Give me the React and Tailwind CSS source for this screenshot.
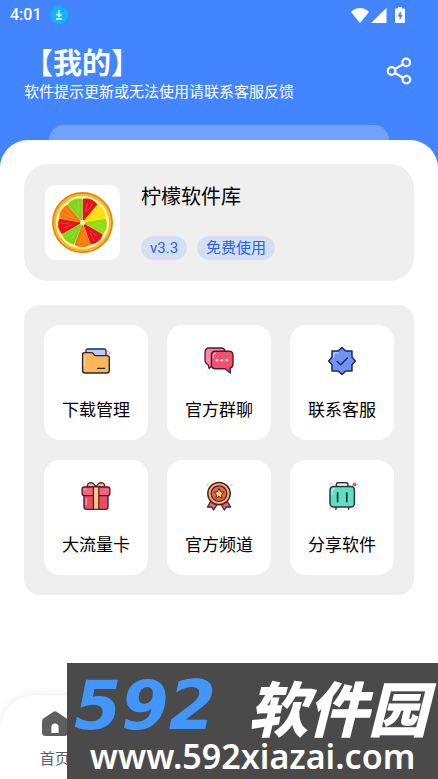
// App.jsx — "我的" profile screen
const tools = [
  { label: '下载管理', Icon: FolderIcon },
  { label: '官方群聊', Icon: ChatIcon },
  { label: '联系客服', Icon: BadgeIcon },
  { label: '大流量卡', Icon: GiftIcon },
  { label: '官方频道', Icon: MedalIcon },
  { label: '分享软件', Icon: SuitcaseIcon },
];

// Clockwise from twelve o'clock, 40 degrees each
const slices = ['#e5141c', '#ffe000', '#8fdc14', '#e5141c', '#f57c0a', '#7fd818', '#e5141c', '#f57c0a', '#7fd818'];

function FruitLogo() {
  return (
    <svg viewBox="0 0 60 60" className="size-[61px]" aria-hidden="true">
      <circle cx="30" cy="30" r="30" fill="#e08410" />
      <circle cx="30" cy="30" r="28.4" fill="#ffb52e" />
      <circle cx="30" cy="30" r="26.2" fill="#fff0a0" />
      {slices.map((color, i) => (
        <g key={i} transform={`rotate(${i * 40 + 20} 30 30)`}>
          <path d="M30 26.6 L23.4 8.6 Q30 5 36.6 8.6 Z" fill={color} stroke={color} strokeWidth="2" strokeLinejoin="round" />
          <path d="M28 11 L29.4 19 M33 9 L31 17" stroke="#fff" strokeOpacity=".2" strokeWidth=".8" strokeLinecap="round" />
        </g>
      ))}
      <circle cx="30" cy="30" r="2.4" fill="#fbe6b0" />
    </svg>
  );
}

function FolderIcon() {
  return (
    <svg viewBox="0 0 30 30" className="size-[30px]" fill="none" strokeLinejoin="round" strokeLinecap="round" aria-hidden="true">
      <circle cx="27.2" cy="6.8" r="1.7" stroke="#f5a3b8" />
      <path d="M5 9 V4.5 Q5 3 6.5 3 H23 Q25 3 25 5 V10 H5 Z" fill="#b9cdfa" stroke="#2b2640" strokeWidth="1.3" />
      <path d="M1.6 8.5 Q1.6 6.6 3.5 6.6 H10.5 Q12 6.6 12.6 8 Q13.2 9.6 15 9.6 H26 Q28.3 9.6 28.3 12 V24.5 Q28.3 27 25.8 27 H4.2 Q1.6 27 1.6 24.5 Z" fill="#fcb65a" stroke="#2b2640" strokeWidth="1.4" />
      <path d="M16.5 22.4 H23.5" stroke="#2b2640" strokeWidth="1.4" />
      <path d="M3.4 10 V21" stroke="#ffd9a0" strokeWidth="1" />
    </svg>
  );
}

function ChatIcon() {
  return (
    <svg viewBox="0 0 30 30" className="size-[30px]" fill="none" strokeLinejoin="round" aria-hidden="true">
      <circle cx="5.4" cy="26.4" r="1.7" stroke="#d9d9e2" strokeWidth=".8" />
      <path d="M5 2 H17 Q21 2 21 6 V14 Q21 19 16 19 H8.5 L5.2 22.5 L4 18.5 Q1 17.6 1 14 V6.5 Q1 2 5 2 Z" fill="#f58ba0" stroke="#4a1b35" strokeWidth="1.3" />
      <path d="M11 5.2 H25 Q29 5.2 29 9.2 V18 Q29 21.5 26 22.2 L26.4 27 L21 22.8 H11.4 Q7.4 22.8 7.4 18.8 V9 Q7.4 5.2 11 5.2 Z" fill="#f4516c" stroke="#4a1b35" strokeWidth="1.4" />
      <path d="M9.4 12 V9.6 Q9.4 7.2 12 7.2" stroke="#ffb3c0" strokeWidth="1.2" />
      <g fill="#fff">
        <rect x="11.8" y="13" width="2.4" height="2.2" rx=".5" />
        <rect x="16.6" y="13" width="2.4" height="2.2" rx=".5" />
        <rect x="21.4" y="13" width="2.4" height="2.2" rx=".5" />
      </g>
    </svg>
  );
}

function BadgeIcon() {
  return (
    <svg viewBox="0 0 30 30" className="size-[30px]" fill="none" strokeLinejoin="round" strokeLinecap="round" aria-hidden="true">
      <path d="M15 1.6 L18.8 5 H25 V11.2 L28.4 15 L25 18.8 V25 H18.8 L15 28.4 L11.2 25 H5 V18.8 L1.6 15 L5 11.2 V5 H11.2 Z" fill="#6f93f8" stroke="#25284f" strokeWidth="1.5" />
      <path d="M6.8 11.5 V6.8 H11.4" stroke="#b9cbff" strokeWidth="1.2" />
      <path d="M10.2 15.4 L13.8 18.8 L20.4 12" stroke="#25284f" strokeWidth="1.4" />
    </svg>
  );
}

function GiftIcon() {
  return (
    <svg viewBox="0 0 30 30" className="size-[30px]" fill="none" strokeLinejoin="round" strokeLinecap="round" aria-hidden="true">
      <circle cx="3.2" cy="3.2" r=".8" fill="#f4a08c" />
      <path d="M15 6 Q13 1.6 9.6 1.6 Q6.4 1.8 6 6 Z M15 6 Q17 1.6 20.4 1.6 Q23.6 1.8 24 6 Z" fill="#fbbf6b" stroke="#47203a" strokeWidth="1.3" />
      <path d="M3 14 H27 V26 Q27 28.4 24.6 28.4 H5.4 Q3 28.4 3 26 Z" fill="#ee4b62" stroke="#47203a" strokeWidth="1.4" />
      <path d="M3 6 H27 Q28.8 6 28.8 8 V12.6 Q28.8 14.6 27 14.6 H3 Q1.2 14.6 1.2 12.6 V8 Q1.2 6 3 6 Z" fill="#f9637a" stroke="#47203a" strokeWidth="1.4" />
      <path d="M12.4 6 H17.8 V28.4 H12.4 Z" fill="#fcc77a" stroke="#47203a" strokeWidth="1.2" />
      <path d="M3.2 9 Q3.2 7.8 4.6 7.8 M5.2 17.5 V24" stroke="#ffb1bd" strokeWidth="1.1" />
    </svg>
  );
}

function MedalIcon() {
  return (
    <svg viewBox="0 0 30 30" className="size-[30px]" fill="none" strokeLinejoin="round" aria-hidden="true">
      <path d="M2.4 3.6 H4.4 M3.4 2.6 V4.6 M26.6 4 H28.6 M27.6 3 V5" stroke="#f8b58c" strokeWidth=".9" />
      <path d="M7.4 19.4 L3.4 26 L7.6 25.8 L9.6 29 L14 22 Z M22.6 19.4 L26.6 26 L22.4 25.8 L20.4 29 L16 22 Z" fill="#f4616a" stroke="#43242f" strokeWidth="1.3" />
      <circle cx="15" cy="12.6" r="11.2" fill="#f9b25e" stroke="#43242f" strokeWidth="1.5" />
      <circle cx="15" cy="12.6" r="7.8" fill="#f0605a" stroke="#43242f" strokeWidth="1.3" />
      <path d="M15 7.4 L16.6 10.8 L20.2 11.2 L17.5 13.8 L18.2 17.4 L15 15.6 L11.8 17.4 L12.5 13.8 L9.8 11.2 L13.4 10.8 Z" fill="#fccb5e" stroke="#43242f" strokeWidth="1" />
    </svg>
  );
}

function SuitcaseIcon() {
  return (
    <svg viewBox="0 0 30 30" className="size-[30px]" fill="none" strokeLinejoin="round" strokeLinecap="round" aria-hidden="true">
      <circle cx="27.4" cy="3.6" r="1.9" fill="#f0566c" />
      <g fill="#fac2b0">
        <circle cx="4" cy="3" r=".9" />
        <circle cx="3.2" cy="27.8" r=".9" />
        <circle cx="28.6" cy="27.2" r=".9" />
      </g>
      <path d="M9.4 5.6 V3.4 Q9.4 1.8 11 1.8 H19.4 Q21 1.8 21 3.4 V5.6 M9 26 V28.2 M21.6 26 V28.2" stroke="#27364a" strokeWidth="1.5" />
      <rect x="3" y="5.6" width="24.4" height="20.4" rx="3.4" fill="#5fe0bd" stroke="#27364a" strokeWidth="1.5" />
      <path d="M5.2 13 V9.8 Q5.2 7.8 7.2 7.8" stroke="#c4f7e8" strokeWidth="1.2" />
      <path d="M10.6 12 V20.6 M19.8 12 V20.6" stroke="#27364a" strokeWidth="1.8" />
    </svg>
  );
}

function StatusBar() {
  return (
    <div className="flex h-[30px] items-center justify-between pl-[10px] pr-[33px]">
      <div className="flex items-center gap-2">
        <span className="text-[16px] font-medium leading-5">4:01</span>
        <svg viewBox="0 0 18 18" className="size-[18px]" aria-hidden="true">
          <circle cx="9" cy="9" r="9" fill="#0fb5fb" />
          <path d="M9 4.2 V10.4 M6.2 8 L9 10.8 L11.8 8 M6 13 H12" fill="none" stroke="#fff" strokeWidth="1.3" />
        </svg>
      </div>
      <div className="flex items-center">
        <svg viewBox="0 0 18 15" className="h-[15px] w-[18px]" fill="#fff" aria-hidden="true">
          <path d="M9 15 L0 4 Q4 0 9 0 Q14 0 18 4 Z" />
        </svg>
        <svg viewBox="0 0 16 15" className="ml-[2px] h-[15px] w-[16px]" fill="#fff" aria-hidden="true">
          <path d="M15.5 0 V15 H0 Z" />
        </svg>
        <svg viewBox="0 0 10 16" className="ml-2 h-4 w-[10px]" aria-hidden="true">
          <path d="M3 0 H7 V1.6 H9 Q10 1.6 10 2.6 V15 Q10 16 9 16 H1 Q0 16 0 15 V2.6 Q0 1.6 1 1.6 H3 Z" fill="#fff" />
          <path d="M5.8 4 L2.4 9.6 H4.6 V13.4 L7.8 7.8 H5.8 Z" fill="#4285ff" />
        </svg>
      </div>
    </div>
  );
}

function Watermark() {
  return (
    <div className="absolute bottom-0 right-0 flex h-[116px] w-[371px] flex-col items-center overflow-hidden whitespace-nowrap bg-[#4a4a4a]">
      <div className="flex h-[76px] w-full items-center justify-between pl-[7px] pr-[10px] pt-[10px] italic">
        <span className="font-['DejaVu_Sans'] text-[68px] font-bold leading-[64px] text-[#4296fb]">592</span>
        <span className="font-['Noto_Sans_CJK_SC'] text-[60px] font-black leading-[64px] text-white">软件园</span>
      </div>
      <span className="font-['Noto_Sans'] text-[34px] font-semibold leading-[34px] text-white">www.592xiazai.com</span>
    </div>
  );
}

export default function App() {
  return (
    <div className="relative flex min-h-screen flex-col bg-[#4285ff] font-['Roboto','Noto_Sans_CJK_SC',sans-serif]">
      <header className="text-white">
        <StatusBar />
        <div className="flex h-[95px] items-start justify-between pl-6 pr-[26px] pt-4">
          <div>
            <h1 className="text-[29px] font-bold leading-9">【我的】</h1>
            <p className="text-[15px] leading-5">软件提示更新或无法使用请联系客服反馈</p>
          </div>
          <button type="button" aria-label="分享" className="mt-[11px]">
            <svg viewBox="0 0 26 28" className="h-7 w-[26px]" fill="none" stroke="#fff" strokeWidth="2.2" aria-hidden="true">
              <circle cx="5.6" cy="14" r="3.8" />
              <circle cx="20.2" cy="5.4" r="3.8" />
              <circle cx="20.4" cy="22.6" r="3.8" />
              <path d="M8.9 12 L16.9 7.4 M8.9 16 L17.1 20.7" />
            </svg>
          </button>
        </div>
        <div className="mx-[49px] h-[15px] rounded-t-[15px] bg-[#72a2ff]" />
      </header>

      <main className="flex grow flex-col rounded-t-[28px] bg-white">
        <div className="flex flex-col gap-6 p-6">
          {/* App info */}
          <section className="flex gap-[21px] rounded-3xl bg-[#efefef] p-[21px]">
            <div className="flex size-[75px] flex-none items-center justify-center rounded-[10px] bg-white">
              <FruitLogo />
            </div>
            <div className="flex flex-col justify-between">
              <h2 className="text-[20px] leading-6">柠檬软件库</h2>
              <div className="flex gap-[10px] text-[15px] leading-6 text-[#1f62f5]">
                <span className="rounded-full bg-[#d5dff2] px-[9px]">v3.3</span>
                <span className="rounded-full bg-[#d5dff2] px-[9px]">免费使用</span>
              </div>
            </div>
          </section>

          {/* Tools */}
          <section className="grid grid-cols-3 gap-x-[19px] gap-y-5 rounded-2xl bg-[#efefef] p-5">
            {tools.map(({ label, Icon }) => (
              <button
                key={label}
                type="button"
                className="flex h-[115px] flex-col items-center gap-[22px] rounded-2xl bg-white pt-[21px] text-[17px] leading-6 text-black"
              >
                <Icon />
                {label}
              </button>
            ))}
          </section>
        </div>

        {/* Bottom tabs */}
        <nav className="mt-auto grid h-[84px] grid-cols-4 rounded-t-[36px] bg-white shadow-[0_0_12px_rgba(0,0,0,0.08)]">
          <a href="#home" className="flex flex-col items-center gap-[11px] pt-4 text-[15px] leading-6 text-[#5f5f5f]">
            <svg viewBox="0 0 26 25" className="h-[25px] w-[26px]" aria-hidden="true">
              <path d="M11.4 .7 Q13 -.3 14.6 .7 L24.6 7.6 Q26 8.6 26 10.4 V21.6 Q26 25 22.6 25 H3.4 Q0 25 0 21.6 V10.4 Q0 8.6 1.4 7.6 Z" fill="#5f5f5f" />
              <path d="M9.4 22 V16 Q9.4 12.4 13 12.4 Q16.6 12.4 16.6 16 V22 Z" fill="#fff" />
            </svg>
            首页
          </a>
        </nav>
      </main>

      <Watermark />
    </div>
  );
}
